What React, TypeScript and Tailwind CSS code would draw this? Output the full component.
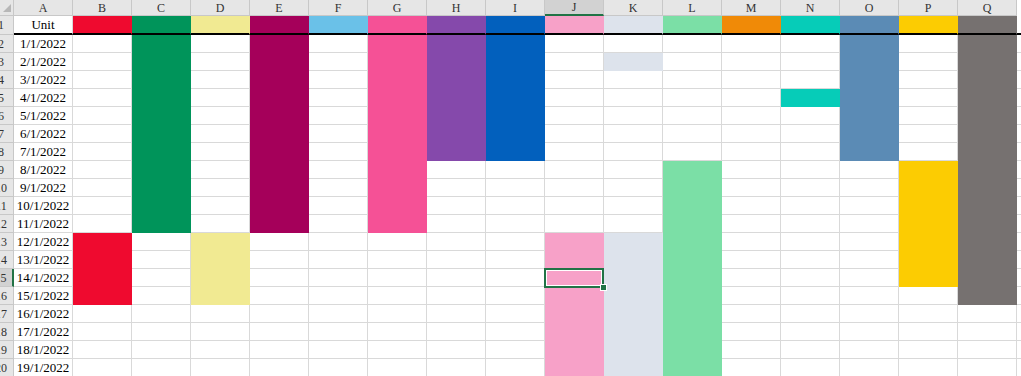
const range = (a: number, b: number) => Array.from({ length: b - a + 1 }, (_, i) => a + i);

type Col = { letter: string; bg?: string; bd?: string; rows: number[] };

const columns: Col[] = [
  { letter: "B", bg: "bg-[#ef0a2f]", bd: "border-[#ef0a2f]", rows: [1, ...range(13, 16)] },
  { letter: "C", bg: "bg-[#00945a]", bd: "border-[#00945a]", rows: range(1, 12) },
  { letter: "D", bg: "bg-[#f1ea92]", bd: "border-[#f1ea92]", rows: [1, ...range(13, 16)] },
  { letter: "E", bg: "bg-[#a5005a]", bd: "border-[#a5005a]", rows: range(1, 12) },
  { letter: "F", bg: "bg-[#6ac1e8]", bd: "border-[#6ac1e8]", rows: [1] },
  { letter: "G", bg: "bg-[#f55196]", bd: "border-[#f55196]", rows: range(1, 12) },
  { letter: "H", bg: "bg-[#8549ab]", bd: "border-[#8549ab]", rows: range(1, 8) },
  { letter: "I", bg: "bg-[#0260bd]", bd: "border-[#0260bd]", rows: range(1, 8) },
  { letter: "J", bg: "bg-[#f7a1c8]", bd: "border-[#f7a1c8]", rows: [1, ...range(13, 20)] },
  { letter: "K", bg: "bg-[#dde3ec]", bd: "border-[#dde3ec]", rows: [1, 3, ...range(13, 20)] },
  { letter: "L", bg: "bg-[#7bdfa6]", bd: "border-[#7bdfa6]", rows: [1, ...range(9, 20)] },
  { letter: "M", bg: "bg-[#f08a07]", bd: "border-[#f08a07]", rows: [1] },
  { letter: "N", bg: "bg-[#06ccb8]", bd: "border-[#06ccb8]", rows: [1, 5] },
  { letter: "O", bg: "bg-[#5b8bb5]", bd: "border-[#5b8bb5]", rows: range(1, 8) },
  { letter: "P", bg: "bg-[#fccc02]", bd: "border-[#fccc02]", rows: [1, ...range(9, 15)] },
  { letter: "Q", bg: "bg-[#767170]", bd: "border-[#767170]", rows: range(1, 16) },
  { letter: "R", rows: [] },
];

const rows = range(1, 20);

function Cell({ col, row }: { col: Col; row: number }) {
  const filled = col.rows.includes(row);
  const selected = col.letter === "J" && row === 15;
  const bottom = row === 1 ? "border-b-2 border-b-black" : "border-b";
  return (
    <div
      className={`relative w-[59px] shrink-0 border-r ${bottom} ${
        filled ? `${col.bg} ${col.bd}` : "border-[#d9d9d9]"
      } ${row === 1 ? "border-b-black" : ""} ${selected ? "z-10" : ""}`}
    >
      {selected && (
        <div className="absolute -left-px -top-px z-10 h-[20px] w-[60px] border-2 border-[#217346]">
          <div className="h-full w-full border border-white" />
          <div className="absolute -bottom-[5px] -right-[5px] h-[7px] w-[7px] border border-white bg-[#217346]" />
        </div>
      )}
    </div>
  );
}

export default function App() {
  return (
    <div className="h-[376px] w-[1021px] overflow-hidden bg-white font-['Liberation_Serif',serif] text-[13px] text-black">
      <div className="-ml-[11px] flex w-max flex-col">
        {/* column letters */}
        <div className="flex h-[16px]">
          <div className="relative w-[25px] shrink-0 border-r border-b border-[#c8c8c8] bg-[#e6e6e6]">
            <svg className="absolute bottom-[3px] right-[2px]" width="8" height="8" viewBox="0 0 8 8">
              <polygon points="8,0 8,8 0,8" fill="#b7b7b7" />
            </svg>
          </div>
          <div className="flex w-[59px] shrink-0 items-center justify-center border-r border-b border-[#c8c8c8] bg-[#e6e6e6] text-[12px] leading-none text-[#333]">
            A
          </div>
          {columns.map((c) => (
            <div
              key={c.letter}
              className={`flex w-[59px] shrink-0 items-center justify-center text-[12px] leading-none text-[#333] ${
                c.letter === "J"
                  ? "border-r border-b-2 border-r-[#c8c8c8] border-b-[#217346] bg-[#d2d2d2]"
                  : c.letter === "R"
                  ? "bg-white"
                  : "border-r border-b border-[#c8c8c8] bg-[#e6e6e6]"
              }`}
            >
              {c.letter === "R" ? "" : c.letter}
            </div>
          ))}
        </div>

        {rows.map((r) => (
          <div key={r} className={`flex ${r === 1 ? "h-[19px]" : "h-[18px]"}`}>
            <div
              className={`flex w-[25px] shrink-0 items-center justify-center text-[12px] leading-none text-[#333] ${
                r === 15
                  ? "border-b border-r-2 border-b-[#c8c8c8] border-r-[#217346] bg-[#d2d2d2]"
                  : "border-r border-b border-[#c8c8c8] bg-[#e6e6e6]"
              }`}
            >
              {r}
            </div>
            <div
              className={`flex w-[59px] shrink-0 items-center justify-center border-r border-[#d9d9d9] ${
                r === 1 ? "border-b-2 border-b-black" : "border-b"
              }`}
            >
              {r === 1 ? "Unit" : `${r - 1}/1/2022`}
            </div>
            {columns.map((c) => (
              <Cell key={c.letter} col={c} row={r} />
            ))}
          </div>
        ))}
      </div>
    </div>
  );
}
